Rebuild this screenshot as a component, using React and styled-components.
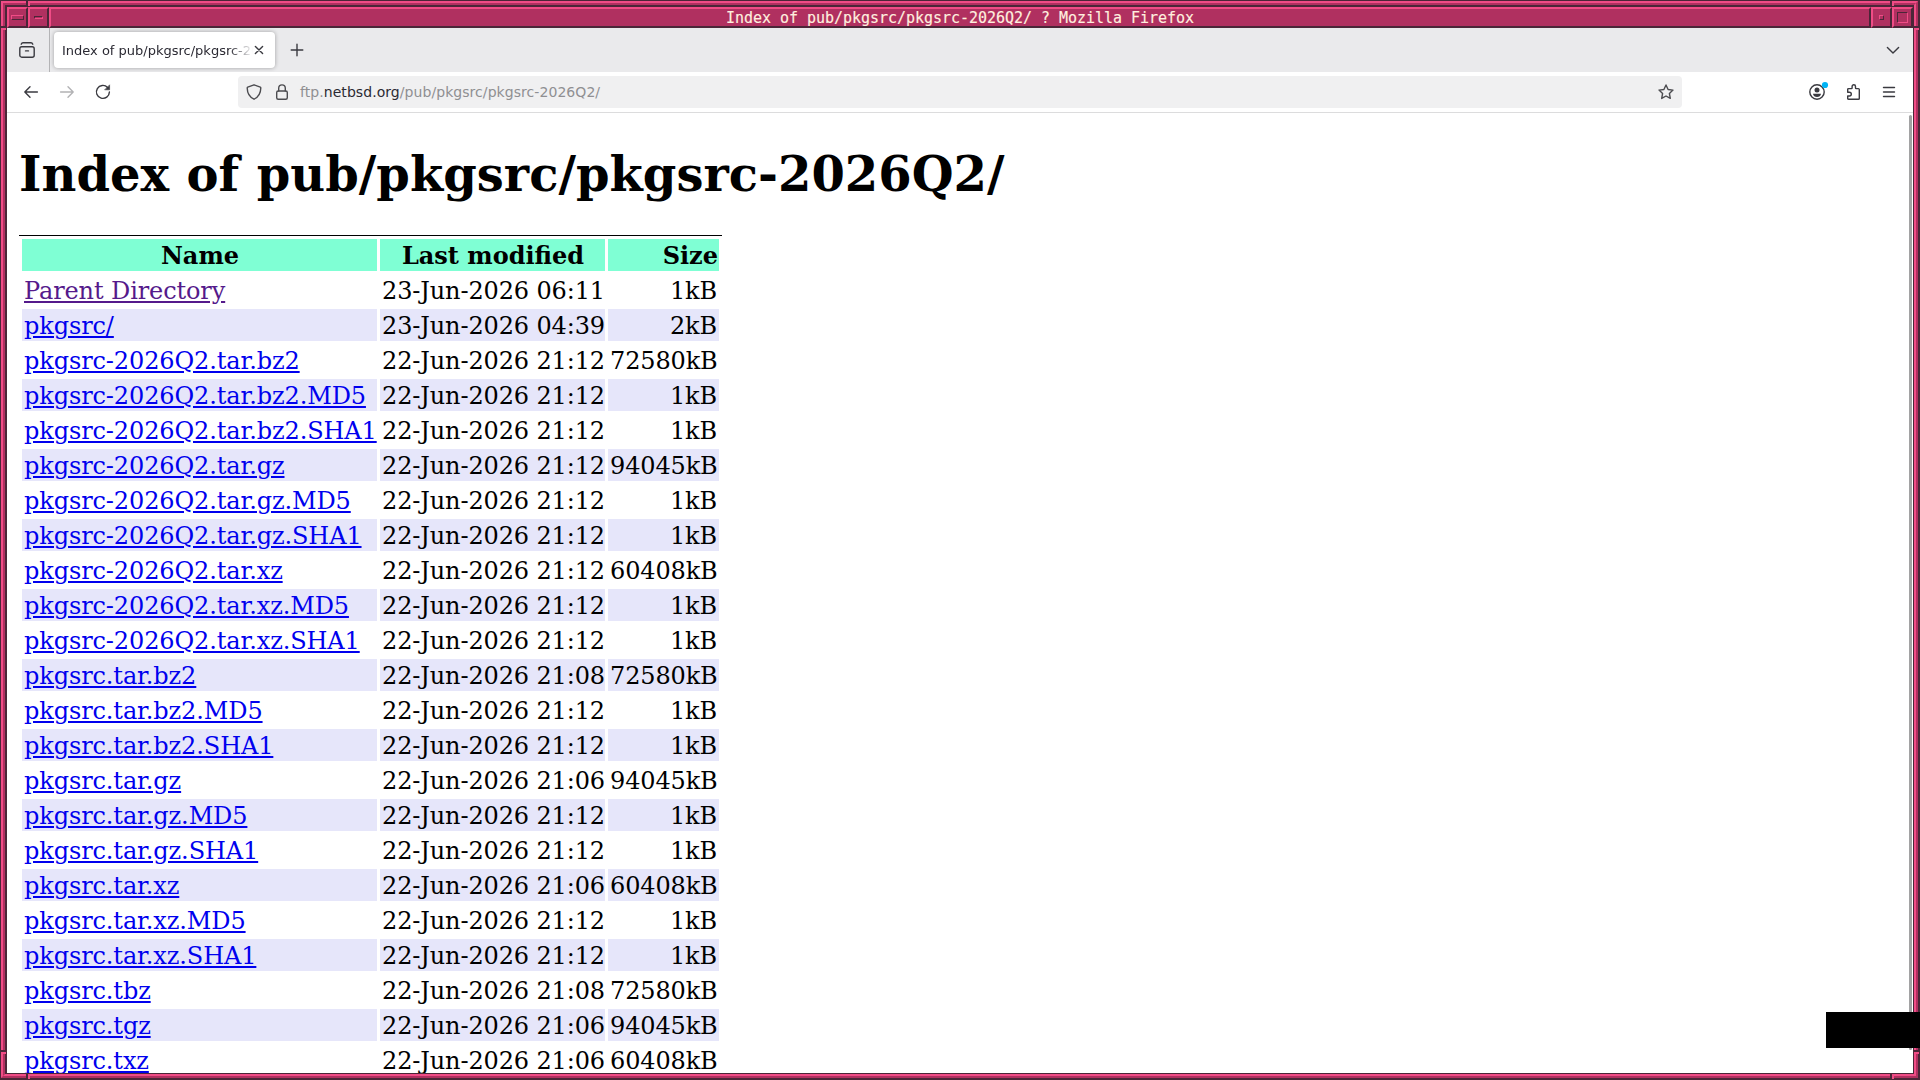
import React from 'react'

import styled, { createGlobalStyle } from 'styled-components'

const GlobalStyle = createGlobalStyle`
   * {
      box-sizing: border-box;
   }
   body {
      margin: 0;
      overflow: hidden;
   }
`

const dark = '#4b2638'
const light = '#f04c86'
const mid = '#b03060'

const Desktop = styled('div')`
   position: relative;
   width: 1920px;
   height: 1080px;
   overflow: hidden;
`
const Bevel = styled('div')`
   height: 100%;
   border-style: solid;
   border-width: ${(p) => p.$width};
   border-color: ${(p) => `${p.$tl} ${p.$br} ${p.$br} ${p.$tl}`};
`
const Window = styled('div')`
   display: flex;
   flex-direction: column;
   height: 100%;
   background: #ffffff;
`

const TitleBar = styled('div')`
   display: flex;
   flex: none;
   height: 21px;
`
const TitleButton = styled('div')`
   display: flex;
   align-items: center;
   justify-content: center;
   width: 21px;
   height: 21px;
   background: ${mid};
   border: 2px solid;
   border-color: ${light} ${dark} ${dark} ${light};
`
const TitleMark = styled('div')`
   width: ${(p) => p.$w}px;
   height: ${(p) => p.$h}px;
   border: 1px solid;
   border-color: ${(p) =>
      p.$sunken
         ? `${dark} ${light} ${light} ${dark}`
         : `${light} ${dark} ${dark} ${light}`};
`
const TitleText = styled('div')`
   flex: 1;
   height: 21px;
   padding-top: 1px;
   background: ${mid};
   border: 2px solid;
   border-color: ${light} ${dark} ${dark} ${light};
   color: #ffefdf;
   font: 15px/16px 'DejaVu Sans Mono', monospace;
   letter-spacing: -0.03px;
   text-align: center;
   white-space: pre;
   -webkit-text-stroke: 0.15px #ffefdf;
`

// the little cuts in the frame that separate the resize corners
const Notch = styled('div')`
   position: absolute;
   left: ${(p) => p.$x}px;
   top: ${(p) => p.$y}px;
   width: ${(p) => (p.$vertical ? 4 : 5)}px;
   height: ${(p) => (p.$vertical ? 5 : 4)}px;
   background: linear-gradient(
      ${(p) => (p.$vertical ? 'to right' : 'to bottom')},
      ${dark} 50%,
      ${light} 50%
   );
`

const TabStrip = styled('div')`
   display: flex;
   flex: none;
   align-items: center;
   height: 44px;
   background: #eaeaec;
   color: #3a3a40;
`
const ViewButton = styled('div')`
   display: flex;
   align-items: center;
   width: 43px;
   height: 44px;
   padding-left: 12px;
   border-right: 1px solid #b4b4b6;
`
const Tab = styled('div')`
   display: flex;
   align-items: center;
   width: 221px;
   height: 36px;
   margin-left: 4px;
   padding: 0 10px 0 8px;
   background: #ffffff;
   border-radius: 4px;
   box-shadow: 0 0 4px rgba(0, 0, 0, 0.32);
`
const TabLabel = styled('div')`
   width: 191px;
   overflow: hidden;
   white-space: nowrap;
   font: 13px 'DejaVu Sans', sans-serif;
   color: #2b2a33;
   mask-image: linear-gradient(to left, transparent, black 24px);
`
const NewTab = styled('div')`
   display: flex;
   margin-left: 13.5px;
`
const AllTabs = styled('div')`
   display: flex;
   margin-left: auto;
   margin-right: 12px;
`

const NavBar = styled('div')`
   display: flex;
   flex: none;
   align-items: center;
   height: 41px;
   padding: 0 16px 0 16px;
   background: #ffffff;
   border-bottom: 1px solid #dcdcdd;
   color: #3a3a40;
`
const NavButtons = styled('div')`
   display: flex;
   gap: 20px;
   width: 215px;
`
const UrlBar = styled('div')`
   display: flex;
   align-items: center;
   width: 1444px;
   height: 32px;
   padding: 0 8px;
   background: #f0f0f1;
   border-radius: 4px;
   color: #4c4c50;
`
const LockBox = styled('div')`
   display: flex;
   margin: 0 10px 0 12px;
`
const Url = styled('div')`
   flex: 1;
   font: 14px 'DejaVu Sans', sans-serif;
   letter-spacing: 0.06px;
   color: #8f8f92;

   b {
      font-weight: 400;
      color: #2b2a33;
   }
`
const Tools = styled('div')`
   display: flex;
   gap: 20px;
   margin-left: auto;
`
const Faded = styled('span')`
   display: flex;
   color: #b2b2b4;
`
const Glyph = styled('svg')`
   display: block;
   flex: none;
   fill: none;
   stroke: currentColor;
   stroke-width: 1.4;
   stroke-linecap: round;
   stroke-linejoin: round;
   overflow: visible;
`

const Page = styled('div')`
   display: flex;
   flex: 1;
   min-height: 0;
   justify-content: space-between;
   overflow: hidden;
   padding: 0 1px 0 12px;
   font-family: 'DejaVu Serif', serif;
   font-size: 24px;
   line-height: 28px;
   color: #000000;
`
const Scrollbar = styled('div')`
   width: 3px;
   height: 935px;
   margin-top: 2px;
   background: #a2a2a3;
   border-radius: 2px;
`
const Heading = styled('h1')`
   margin: 33px 0 32px;
   font-size: 48px;
   line-height: 57px;
   font-weight: bold;
   letter-spacing: 0.03px;
   word-spacing: 0.6px;
   white-space: nowrap;
`
const Listing = styled('table')`
   width: 703px;
   table-layout: fixed;
   border-collapse: separate;
   border-spacing: 3px;
   border-top: 1px solid #000000;
`
const Row = styled('tr')`
   height: 32px;
   background: ${(p) => (p.$striped ? '#e6e6fa' : '#ffffff')};
`
const HeadCell = styled('th')`
   width: ${(p) => p.$width}px;
   padding: 2px 1px 0 2px;
   background: #7fffd4;
   text-align: ${(p) => p.$align || 'center'};
   white-space: nowrap;
`
const Cell = styled('td')`
   padding: 2px 2px 0;
   text-align: ${(p) => p.$align || 'left'};
   letter-spacing: -0.13px;
   white-space: nowrap;
`
const FileLink = styled('a')`
   color: ${(p) => (p.$visited ? '#551a8b' : '#0000ee')};
   letter-spacing: -0.11px;
   text-decoration: underline;
`
const BlackBox = styled('div')`
   position: absolute;
   left: 1826px;
   top: 1012px;
   width: 94px;
   height: 36px;
   background: #000000;
`

const files = [
   ['Parent Directory', '23-Jun-2026 06:11', '1kB'],
   ['pkgsrc/', '23-Jun-2026 04:39', '2kB'],
   ['pkgsrc-2026Q2.tar.bz2', '22-Jun-2026 21:12', '72580kB'],
   ['pkgsrc-2026Q2.tar.bz2.MD5', '22-Jun-2026 21:12', '1kB'],
   ['pkgsrc-2026Q2.tar.bz2.SHA1', '22-Jun-2026 21:12', '1kB'],
   ['pkgsrc-2026Q2.tar.gz', '22-Jun-2026 21:12', '94045kB'],
   ['pkgsrc-2026Q2.tar.gz.MD5', '22-Jun-2026 21:12', '1kB'],
   ['pkgsrc-2026Q2.tar.gz.SHA1', '22-Jun-2026 21:12', '1kB'],
   ['pkgsrc-2026Q2.tar.xz', '22-Jun-2026 21:12', '60408kB'],
   ['pkgsrc-2026Q2.tar.xz.MD5', '22-Jun-2026 21:12', '1kB'],
   ['pkgsrc-2026Q2.tar.xz.SHA1', '22-Jun-2026 21:12', '1kB'],
   ['pkgsrc.tar.bz2', '22-Jun-2026 21:08', '72580kB'],
   ['pkgsrc.tar.bz2.MD5', '22-Jun-2026 21:12', '1kB'],
   ['pkgsrc.tar.bz2.SHA1', '22-Jun-2026 21:12', '1kB'],
   ['pkgsrc.tar.gz', '22-Jun-2026 21:06', '94045kB'],
   ['pkgsrc.tar.gz.MD5', '22-Jun-2026 21:12', '1kB'],
   ['pkgsrc.tar.gz.SHA1', '22-Jun-2026 21:12', '1kB'],
   ['pkgsrc.tar.xz', '22-Jun-2026 21:06', '60408kB'],
   ['pkgsrc.tar.xz.MD5', '22-Jun-2026 21:12', '1kB'],
   ['pkgsrc.tar.xz.SHA1', '22-Jun-2026 21:12', '1kB'],
   ['pkgsrc.tbz', '22-Jun-2026 21:08', '72580kB'],
   ['pkgsrc.tgz', '22-Jun-2026 21:06', '94045kB'],
   ['pkgsrc.txz', '22-Jun-2026 21:06', '60408kB'],
]

const notches = [
   { x: 26, y: 1, vertical: true },
   { x: 1890, y: 1, vertical: true },
   { x: 26, y: 1074, vertical: true },
   { x: 1890, y: 1074, vertical: true },
   { x: 1, y: 26 },
   { x: 1914, y: 26 },
   { x: 1, y: 1050 },
   { x: 1914, y: 1050 },
]

function Icon({ size = 16, children }) {
   return (
      <Glyph width={size} height={size} viewBox={`0 0 ${size} ${size}`}>
         {children}
      </Glyph>
   )
}

function WindowTitle() {
   return (
      <TitleBar>
         <TitleButton>
            <TitleMark $w={13} $h={5} />
         </TitleButton>
         <TitleButton>
            <TitleMark $w={9} $h={3} $sunken />
         </TitleButton>
         <TitleText>
            Index of pub/pkgsrc/pkgsrc-2026Q2/ ? Mozilla Firefox
         </TitleText>
         <TitleButton>
            <TitleMark $w={5} $h={5} />
         </TitleButton>
         <TitleButton>
            <TitleMark $w={11} $h={11} $sunken />
         </TitleButton>
      </TitleBar>
   )
}

function Tabs() {
   return (
      <TabStrip>
         <ViewButton>
            <Icon>
               <path d="M2.2 2.2Q2.8.8 4 .8h8q1.2 0 1.8 1.4" />
               <rect x=".8" y="4.8" width="14.4" height="10.4" rx="2" />
               <path d="M6.5 8.9h3" />
            </Icon>
         </ViewButton>
         <Tab>
            <TabLabel>Index of pub/pkgsrc/pkgsrc-2026Q2/</TabLabel>
            <Icon size={12}>
               <path d="M2.4 2.4l7.2 7.2M9.6 2.4L2.4 9.6" />
            </Icon>
         </Tab>
         <NewTab>
            <Icon>
               <path d="M8 2.2v11.6M2.2 8h11.6" />
            </Icon>
         </NewTab>
         <AllTabs>
            <Icon>
               <path d="M2.4 5.4L8 11l5.6-5.6" />
            </Icon>
         </AllTabs>
      </TabStrip>
   )
}

function Navigation() {
   return (
      <NavBar>
         <NavButtons>
            <Icon>
               <path d="M14.4 8H1.8M7 2.8L1.8 8 7 13.2" />
            </Icon>
            <Faded>
               <Icon>
                  <path d="M1.6 8h12.6M9 2.8L14.2 8 9 13.2" />
               </Icon>
            </Faded>
            <Icon>
               <path d="M12.6 3.4A6.5 6.5 0 1 0 14.4 8" />
               <path d="M14.6 1.2v4.6H10z" fill="currentColor" strokeWidth=".6" />
            </Icon>
         </NavButtons>
         <UrlBar>
            <Icon>
               <path d="M8 .8l6.3 2.4q.5.2.5.8C14.7 9.2 12.6 13 8 15.2 3.4 13 1.3 9.2 1.2 4q0-.6.5-.8z" />
            </Icon>
            <LockBox>
               <Icon>
                  <rect x="2.7" y="7" width="10.6" height="8.2" rx="1.5" />
                  <path d="M4.7 7V4.2a3.3 3.3 0 0 1 6.6 0V7" />
               </Icon>
            </LockBox>
            <Url>
               ftp.<b>netbsd.org</b>/pub/pkgsrc/pkgsrc-2026Q2/
            </Url>
            <Icon>
               <path d="M8 1l2.1 4.5 4.9.6-3.6 3.4.9 4.9L8 12l-4.3 2.4.9-4.9L1 6.1l4.9-.6z" />
            </Icon>
         </UrlBar>
         <Tools>
            <Icon>
               <circle cx="8" cy="8" r="7.2" />
               <circle cx="8" cy="6" r="2.5" fill="currentColor" stroke="none" />
               <path
                  d="M4 9.8h8q-.6 3.2-4 3.2t-4-3.2z"
                  fill="currentColor"
                  stroke="none"
               />
               <circle cx="16" cy="1" r="3.1" fill="#00b3f4" stroke="none" />
            </Icon>
            <Icon>
               <path d="M2.7 8.2V5.5q0-.9.9-.9h2.8q.7 0 .7-.7V2.5a1.7 1.7 0 0 1 3.4 0v1.4q0 .7.7.7h2.2q.9 0 .9.9v8.9q0 .9-.9.9H3.6q-.9 0-.9-.9V12h1.7a1.9 1.9 0 0 0 0-3.8z" />
            </Icon>
            <Icon>
               <path d="M2.5 3.5h11M2.5 8h11M2.5 12.5h11" />
            </Icon>
         </Tools>
      </NavBar>
   )
}

function DirectoryIndex() {
   return (
      <Page>
         <div>
            <Heading>Index of pub/pkgsrc/pkgsrc-2026Q2/</Heading>
            <Listing>
               <thead>
                  <Row>
                     <HeadCell $width={355}>Name</HeadCell>
                     <HeadCell $width={225}>Last modified</HeadCell>
                     <HeadCell $width={111} $align="right">
                        Size
                     </HeadCell>
                  </Row>
               </thead>
               <tbody>
                  {files.map(([name, modified, size], i) => (
                     <Row key={name} $striped={i % 2 === 1}>
                        <Cell>
                           <FileLink $visited={i === 0}>{name}</FileLink>
                        </Cell>
                        <Cell>{modified}</Cell>
                        <Cell $align="right">{size}</Cell>
                     </Row>
                  ))}
               </tbody>
            </Listing>
         </div>
         <Scrollbar />
      </Page>
   )
}

export default function App() {
   return (
      <Desktop>
         <GlobalStyle />
         <Bevel $width="1px 2px 2px 1px" $tl={dark} $br={dark}>
            <Bevel $width="2px" $tl={light} $br={mid}>
               <Bevel $width="2px" $tl={mid} $br={light}>
                  <Bevel $width="2px 1px 1px 2px" $tl={dark} $br={dark}>
                     <Window>
                        <WindowTitle />
                        <Tabs />
                        <Navigation />
                        <DirectoryIndex />
                     </Window>
                  </Bevel>
               </Bevel>
            </Bevel>
         </Bevel>
         {notches.map((n) => (
            <Notch key={`${n.x}-${n.y}`} $x={n.x} $y={n.y} $vertical={n.vertical} />
         ))}
         <BlackBox />
      </Desktop>
   )
}
